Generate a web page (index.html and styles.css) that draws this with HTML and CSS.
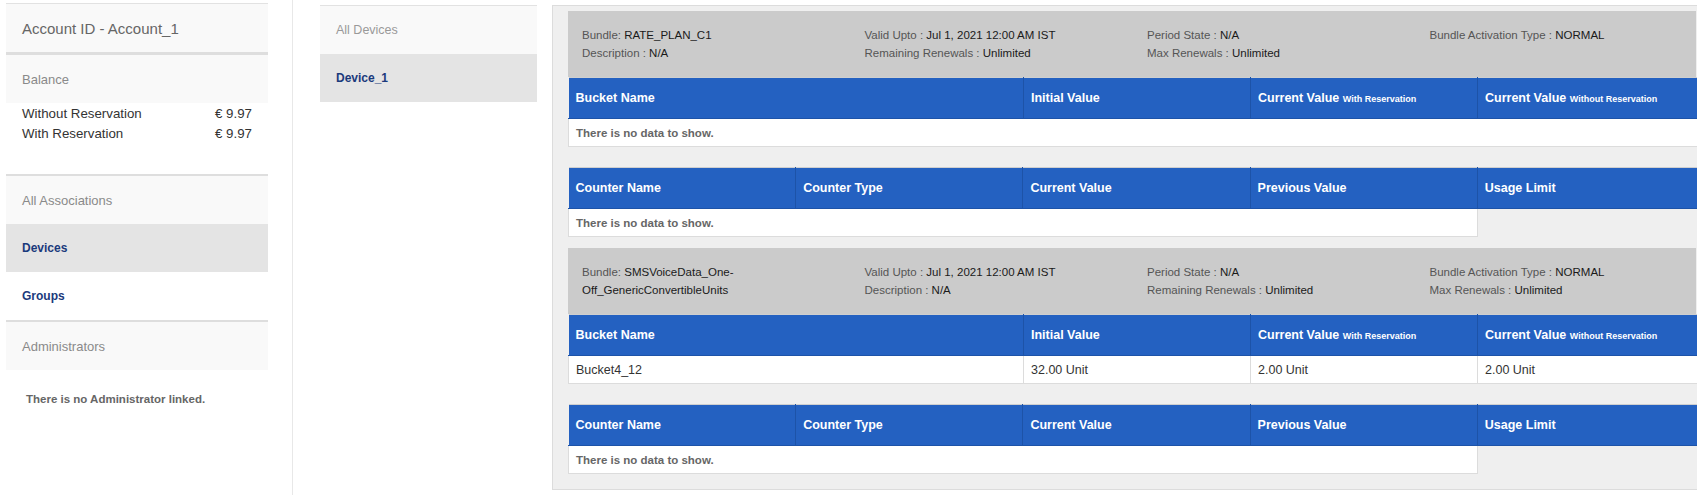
FILE: index.html
```html
<!DOCTYPE html>
<html>
<head>
<meta charset="utf-8">
<link rel="stylesheet" href="styles.css">
</head>
<body>
<div class="page">
  <aside class="side">
    <div class="panel">
      <div class="ph ph-title">Account ID - Account_1</div>
      <div class="sep sep-thick"></div>
      <div class="ph">Balance</div>
      <div class="balance">
        <div class="bal-row"><span>Without Reservation</span><span>€ 9.97</span></div>
        <div class="bal-row"><span>With Reservation</span><span>€ 9.97</span></div>
      </div>
      <div class="sep"></div>
      <div class="ph">All Associations</div>
      <div class="nav-item active">Devices</div>
      <div class="nav-item">Groups</div>
      <div class="sep"></div>
      <div class="ph">Administrators</div>
      <div class="empty-admin">There is no Administrator linked.</div>
    </div>
  </aside>

  <section class="devices">
    <div class="panel">
      <div class="ph">All Devices</div>
      <div class="nav-item active">Device_1</div>
    </div>
  </section>

  <main class="bundles">
    <div class="bundle">
      <div class="bhead">
        <div class="bcol">
          <div><span class="k">Bundle:</span> RATE_PLAN_C1</div>
          <div><span class="k">Description :</span> N/A</div>
        </div>
        <div class="bcol">
          <div><span class="k">Valid Upto :</span> Jul 1, 2021 12:00 AM IST</div>
          <div><span class="k">Remaining Renewals :</span> Unlimited</div>
        </div>
        <div class="bcol">
          <div><span class="k">Period State :</span> N/A</div>
          <div><span class="k">Max Renewals :</span> Unlimited</div>
        </div>
        <div class="bcol">
          <div><span class="k">Bundle Activation Type :</span> NORMAL</div>
        </div>
      </div>
      <table class="grid bucket">
        <colgroup><col class="c2"><col class="c1"><col class="c1"><col class="c1"></colgroup>
        <thead><tr><th>Bucket Name</th><th>Initial Value</th><th>Current Value <small>With Reservation</small></th><th>Current Value <small>Without Reservation</small></th></tr></thead>
        <tbody><tr><td colspan="4" class="nodata">There is no data to show.</td></tr></tbody>
      </table>
      <table class="grid counter">
        <colgroup><col class="c1"><col class="c1"><col class="c1"><col class="c1"><col class="c1"></colgroup>
        <thead><tr><th>Counter Name</th><th>Counter Type</th><th>Current Value</th><th>Previous Value</th><th>Usage Limit</th></tr></thead>
        <tbody><tr><td colspan="4" class="nodata">There is no data to show.</td></tr></tbody>
      </table>
    </div>

    <div class="bundle">
      <div class="bhead">
        <div class="bcol">
          <div class="wrap"><span class="k">Bundle:</span> SMSVoiceData_One-<br>Off_GenericConvertibleUnits</div>
        </div>
        <div class="bcol">
          <div><span class="k">Valid Upto :</span> Jul 1, 2021 12:00 AM IST</div>
          <div><span class="k">Description :</span> N/A</div>
        </div>
        <div class="bcol">
          <div><span class="k">Period State :</span> N/A</div>
          <div><span class="k">Remaining Renewals :</span> Unlimited</div>
        </div>
        <div class="bcol">
          <div><span class="k">Bundle Activation Type :</span> NORMAL</div>
          <div><span class="k">Max Renewals :</span> Unlimited</div>
        </div>
      </div>
      <table class="grid bucket">
        <colgroup><col class="c2"><col class="c1"><col class="c1"><col class="c1"></colgroup>
        <thead><tr><th>Bucket Name</th><th>Initial Value</th><th>Current Value <small>With Reservation</small></th><th>Current Value <small>Without Reservation</small></th></tr></thead>
        <tbody><tr><td>Bucket4_12</td><td>32.00 Unit</td><td>2.00 Unit</td><td>2.00 Unit</td></tr></tbody>
      </table>
      <table class="grid counter">
        <colgroup><col class="c1"><col class="c1"><col class="c1"><col class="c1"><col class="c1"></colgroup>
        <thead><tr><th>Counter Name</th><th>Counter Type</th><th>Current Value</th><th>Previous Value</th><th>Usage Limit</th></tr></thead>
        <tbody><tr><td colspan="4" class="nodata">There is no data to show.</td></tr></tbody>
      </table>
    </div>
  </main>
</div>
</body>
</html>
```

FILE: styles.css
```css
html, body {
  margin: 0;
  padding: 0;
  overflow: hidden;
  background: #fff;
}
body {
  font-family: "Liberation Sans", Arial, sans-serif;
  color: #333;
}
.page {
  display: flex;
  align-items: flex-start;
  height: 495px;
  width: 2000px;
}

/* left column */
.side {
  flex: none;
  width: 293px;
  height: 495px;
  box-sizing: border-box;
  padding: 3px 24px 0 6px;
  border-right: 1px solid #e8e8e8;
}
.panel {
  border-top: 1px solid #e2e2e2;
}
.ph {
  height: 48px;
  display: flex;
  align-items: center;
  padding-left: 16px;
  background: #f9f9f9;
  font-size: 13px;
  color: #8a8a8a;
}
.ph-title {
  font-size: 15px;
  color: #666;
}
.sep {
  height: 2px;
  background: #dedede;
}
.sep-thick {
  height: 3px;
}
.balance {
  padding: 1px 16px 30px 16px;
}
.bal-row {
  display: flex;
  justify-content: space-between;
  font-size: 13.3px;
  line-height: 20px;
  color: #333;
}
.nav-item {
  height: 48px;
  display: flex;
  align-items: center;
  padding-left: 16px;
  font-size: 12px;
  font-weight: bold;
  color: #1b3a7c;
}
.nav-item.active {
  background: #e4e4e4;
}
.empty-admin {
  padding: 22px 0 0 20px;
  font-size: 11.5px;
  line-height: 14px;
  font-weight: bold;
  color: #666;
}

/* devices column */
.devices {
  flex: none;
  width: 259px;
  box-sizing: border-box;
  padding: 5px 15px 0 27px;
}
.devices .ph {
  font-size: 12.5px;
  color: #999;
}

/* bundles */
.bundles {
  flex: none;
  width: 1200px;
  box-sizing: border-box;
  margin-top: 5px;
  padding: 5px 0 15px 15px;
  background: #efefef;
  border: 1px solid #dcdcdc;
}
.bundle {
  width: 1128px;
  margin-bottom: 11px;
}
.bundle:last-child {
  margin-bottom: 0;
}
.bhead {
  display: grid;
  grid-template-columns: repeat(4, 1fr);
  column-gap: 40px;
  padding: 15px 24px 15px 14px;
  background: #cbcbcb;
  font-size: 11.5px;
  line-height: 18px;
  color: #1a1a1a;
}
.bhead .k {
  color: #555;
}

table.grid {
  width: 1137px;
  table-layout: fixed;
  border-collapse: collapse;
  border-top: 1px solid #cfcfcf;
}
table.grid col.c1 { width: 227px; }
table.grid col.c2 { width: 455px; }
table.grid th {
  height: 40px;
  padding: 0 7px;
  text-align: left;
  background: #2461c1;
  color: #fff;
  font-size: 12.5px;
  font-weight: bold;
  border-right: 1px solid #1d53a8;
  border-bottom: 1px solid #1d53a8;
  white-space: nowrap;
}
table.grid th small {
  font-size: 9px;
}
table.grid td {
  height: 27px;
  padding: 0 7px;
  background: #fff;
  font-size: 12.5px;
  color: #333;
  border: 1px solid #dcdcdc;
  border-top: none;
}
table.grid td.nodata {
  font-size: 11.5px;
  font-weight: bold;
  color: #666;
}
table.counter {
  margin-top: 20px;
}
```
